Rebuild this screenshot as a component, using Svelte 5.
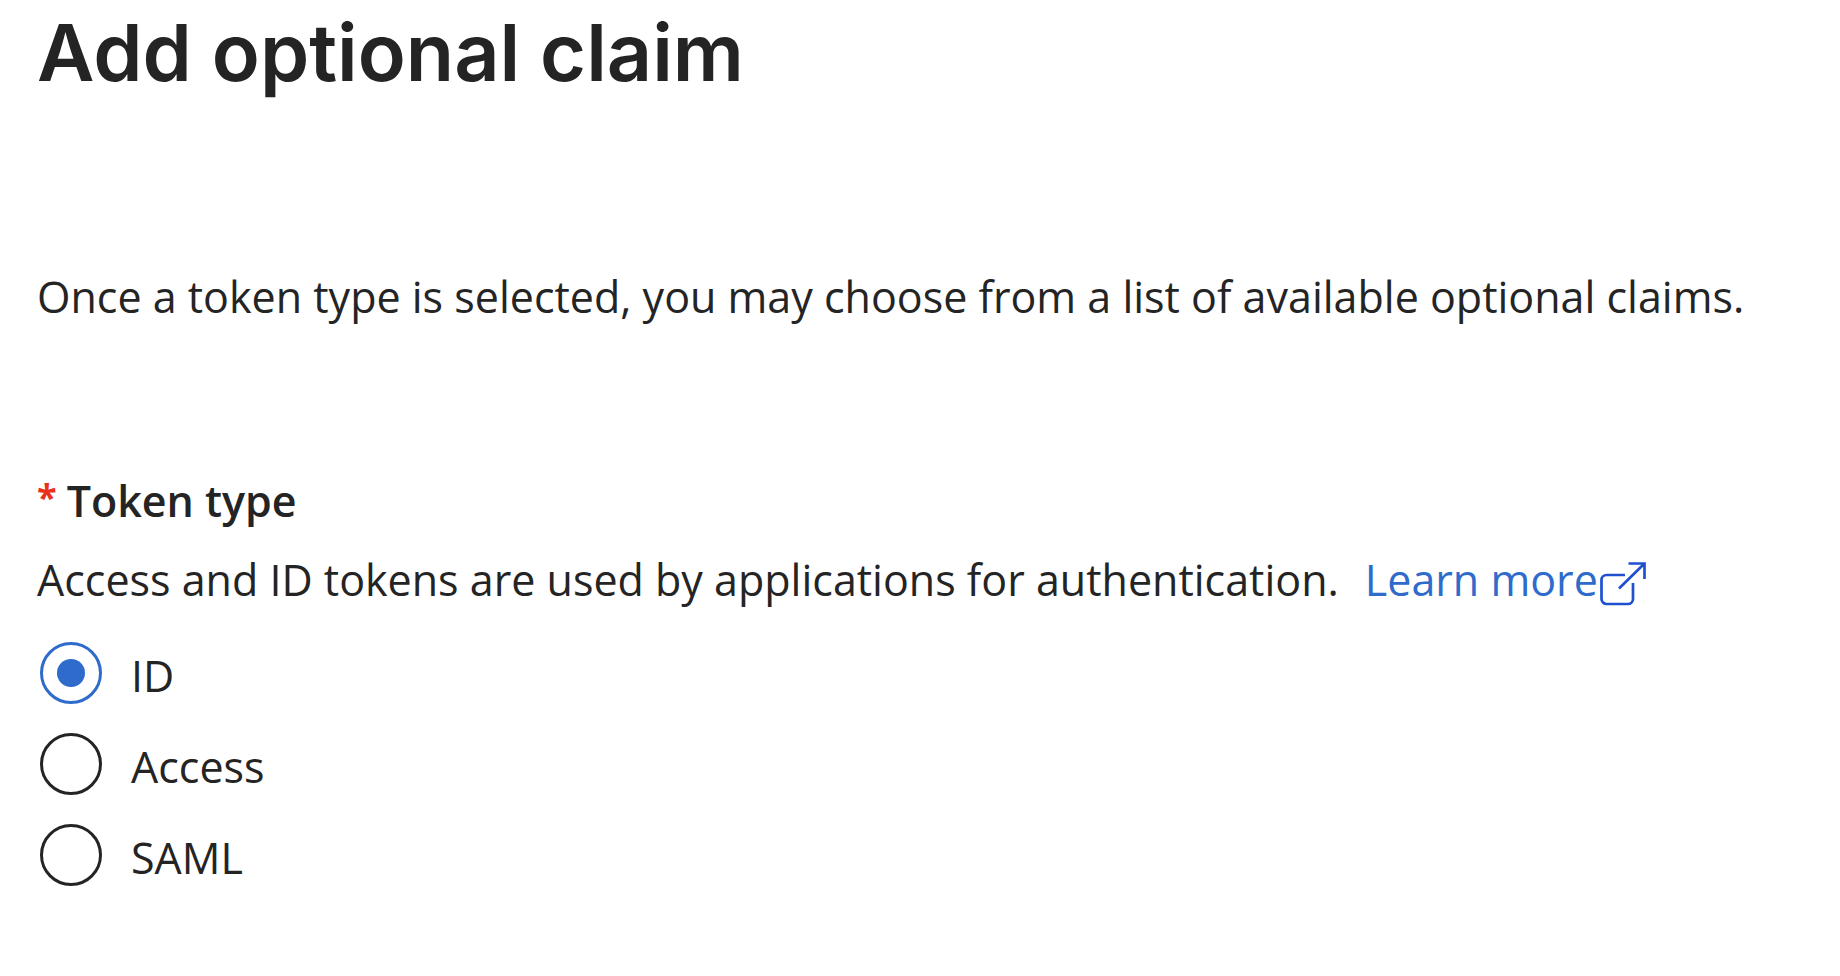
<script>
  const tokenTypes = [
    { value: 'id', label: 'ID' },
    { value: 'access', label: 'Access' },
    { value: 'saml', label: 'SAML' },
  ];

  let selected = $state('id');
</script>

<main class="panel">
  <h1>Add optional claim</h1>

  <p class="intro">Once a token type is selected, you may choose from a list of available optional claims.</p>

  <fieldset aria-describedby="token-help">
    <legend><span class="required">*</span>Token type</legend>

    <p id="token-help" class="help">
      <span>Access and ID tokens are used by applications for authentication.</span>
      <a href="#learn-more">
        Learn more
        <svg viewBox="0 0 46 44" width="46" height="44" fill="none" stroke="#1f50cf" stroke-width="2.7" aria-hidden="true">
          <path d="M25 13H6.500a5 5 0 0 0-5 5v19a5 5 0 0 0 5 5h21.500a5 5 0 0 0 5-5V21" />
          <path d="M19 26.500L44 2M28.500 1.500h16V17" />
        </svg>
      </a>
    </p>

    <div class="options">
      {#each tokenTypes as type}
        <div class="option">
          <input type="radio" name="token-type" id="token-{type.value}" value={type.value} bind:group={selected} />
          <label for="token-{type.value}">{type.label}</label>
        </div>
      {/each}
    </div>
  </fieldset>
</main>

<style>
  :global(body) {
    background: #fff;
  }

  .panel {
    padding: 4px 37px 80px;
    color: #242424;
    font-family: 'Open Sans', 'Noto Sans', sans-serif;
    font-size: 43px;
    line-height: 60px;
  }

  h1 {
    margin: 0;
    font-family: Inter, sans-serif;
    font-size: 79px;
    font-weight: 600;
    line-height: 96px;
  }

  .intro {
    margin: 167px 0 144px;
  }

  fieldset {
    min-width: 0;
    margin: 0;
    padding: 0;
    border: 0;
  }

  legend {
    display: flex;
    align-items: flex-start;
    gap: 10px;
    padding: 0;
    font-weight: 600;
  }

  .required {
    color: #e8301c;
    font-size: 36px;
    font-weight: 700;
    line-height: 52px;
  }

  .help {
    display: flex;
    flex-wrap: wrap;
    column-gap: 26px;
    margin: 19px 0 32px;
  }

  a {
    display: flex;
    align-items: center;
    gap: 2px;
    color: #2e6bcb;
    text-decoration: none;
  }

  svg {
    margin-top: 8px;
  }

  .options {
    display: grid;
    gap: 29px;
    padding-left: 3px;
  }

  .option {
    display: flex;
    align-items: center;
    gap: 29px;
    height: 62px;
  }

  input {
    display: grid;
    flex: none;
    place-items: center;
    box-sizing: border-box;
    width: 62px;
    height: 62px;
    margin: 0;
    border: 3px solid #242424;
    border-radius: 50%;
    appearance: none;
  }

  input:checked {
    border-color: #2e6bcb;
  }

  input:checked::before {
    width: 28px;
    height: 28px;
    border-radius: 50%;
    background: #2e6bcb;
    content: '';
  }

  label {
    padding-top: 6px;
  }
</style>
